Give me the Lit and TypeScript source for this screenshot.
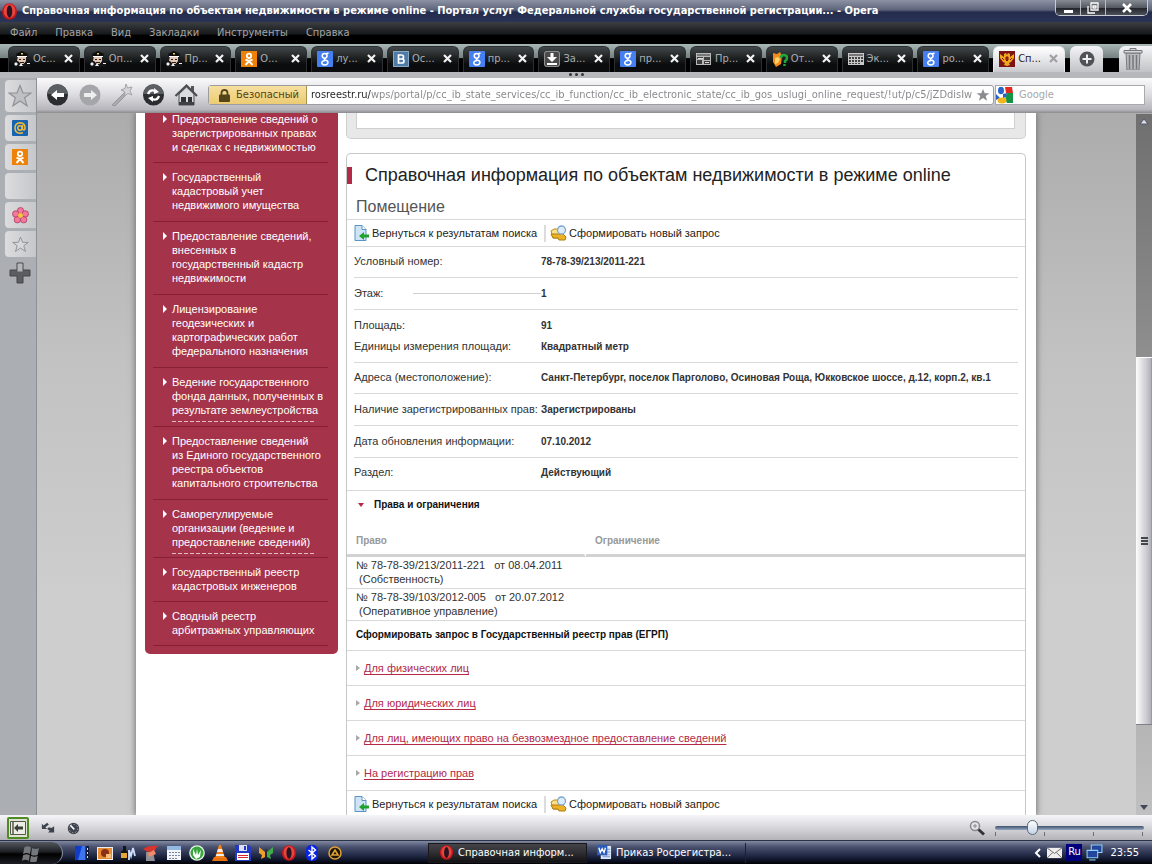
import { LitElement, html, css, svg, type TemplateResult } from "lit";
import { customElement, property } from "lit/decorators.js";

const icon = (size: number, body: TemplateResult, box = 16) =>
  html`<svg width=${size} height=${size} viewBox="0 0 ${box} ${box}" aria-hidden="true">${body}</svg>`;

const STAR = "M8 1l2 5h5.3l-4.2 3.2 1.6 5.3L8 11.3l-4.700 3.200 1.600-5.300L.7 6H6z";

const glyphs: Record<string, TemplateResult> = {
  opera: svg`<ellipse cx="8" cy="8" rx="7" ry="7.800" fill="#c4161c"/><ellipse cx="8" cy="7.500" rx="5.500" ry="6.500" fill="#e8453c"/><ellipse cx="8" cy="8" rx="2.600" ry="5.800" fill="#2a1424"/>`,
  police: svg`<path d="M2 3l6-3 6 3-1 3H3z" fill="#0c0c0c"/><path d="M7 2h2v1.500H7z" fill="#e7c85a"/><path d="M4 5h8v5l-2 3H6l-3-3z" fill="#e3c9b8"/><path d="M3 5h10v1H3z" fill="#fff"/><path d="M5 8h2v1H5zM9 8h2v1H9zM6 11h4v1H6z" fill="#2b1a14"/><path d="M0 11l4-1 4 4 4-3 4 1v4H0z" fill="#151515"/><path d="M0 13l2-2 2 2-2 2zM5 15l2-3 2 3zM13 12h3v1h-3z" fill="#f0f0f0"/>`,
  ok: svg`<path d="M0 0h16v16H0z" fill="#ee8208"/><circle cx="8" cy="4.800" r="2.200" fill="none" stroke="#fff" stroke-width="1.800"/><path d="M4.500 8.500q3.500 2.200 7 0M8 10l-3.500 4M8 10l3.500 4" fill="none" stroke="#fff" stroke-width="1.900"/>`,
  google: svg`<rect width="16" height="16" rx="1" fill="#4680f0"/><circle cx="7.600" cy="4.800" r="2.400" fill="none" stroke="#fff" stroke-width="1.500"/><path d="M9 3l2.500-1M8.500 7.200q-2 1-.5 1.800 3.200.8 3 2.700-.5 2.300-3.300 2.300-3-.2-3-2.200 .3-2 3.300-2.300" fill="none" stroke="#fff" stroke-width="1.400"/>`,
  vk: svg`<path d="M0 0h16v16H0z" fill="#4f7ba6"/><path d="M.5.500h15v15H.5z" fill="none" stroke="#86a9c8"/><path d="M5.500 4v8H9q2 0 2-2T9 8H6h2.600q1.900 0 1.900-2t-2-2z" fill="none" stroke="#fff" stroke-width="1.700"/>`,
  down: svg`<rect width="16" height="16" rx="3" fill="#909090"/><rect x="1" y="1" width="14" height="14" rx="2" fill="#4a4a4a"/><path d="M6.500 2h3v4H13l-5 5-5-5h3.500zM3 12h10v2H3z" fill="#fff"/>`,
  page: svg`<path d="M0 2h15v12H0z" fill="#b9b9b9"/><path d="M1 3h13v2H1z" fill="#777"/><path d="M1 6h6v2H1zM8 6h6v3H8zM1 9h5v4H1zM8 10h6v3H8z" fill="#3f3f3f"/><path d="M2 7h5v1H2zM9 11h4v1H9z" fill="#ddd"/>`,
  fox: svg`<path d="M1 2l4 1 3-2 2 4-1 8-5 3-3-5z" fill="#f28a1c"/><path d="M3 7l3-1 2 2-2 4-3 1z" fill="#ffd46b"/><path d="M9 7q0-3 3-3t3 3q0 2-2 3v2M12.500 13v2" fill="none" stroke="#20a838" stroke-width="2.400"/>`,
  grid: svg`<path d="M0 2h16v12H0z" fill="#c9c9c9"/><path d="M1 3h14v2H1z" fill="#777"/><path d="M1 6h2v2H1zM4 6h2v2H4zM7 6h2v2H7zM10 6h2v2h-2zM13 6h2v2h-2zM1 9h2v2H1zM4 9h2v2H4zM7 9h2v2H7zM10 9h2v2h-2zM13 9h2v2h-2zM1 12h2v1H1zM4 12h2v1H4zM7 12h2v1H7zM10 12h2v1h-2z" fill="#444"/>`,
  eagle: svg`<path d="M0 0h16v16H0z" fill="#7c1416"/><path d="M1 3l4 3V3l2-1 1 2 1-2 2 1v3l4-3v4l-3 4-2 1 1 2-3 1-3-1 1-2-2-1-3-4z" fill="#f0a81c"/><path d="M7 6h2v3l-1 1-1-1zM3 7l2 2M13 7l-2 2" stroke="#7c1416" fill="#b8251c"/>`,
};

const glyph = (name: string, size = 16) => icon(size, glyphs[name]);

const tabs: [string, string][] = [
  ["police", "Ос..."], ["police", "Оп..."], ["police", "Пр..."], ["ok", "О..."],
  ["google", "лу..."], ["vk", "Ос..."], ["google", "пр..."], ["down", "За..."],
  ["google", "пр..."], ["page", "Пр..."], ["fox", "От..."], ["grid", "Эк..."],
  ["google", "ро..."], ["eagle", "Сп..."],
];

@customElement("window-title")
class WindowTitle extends LitElement {
  static styles = css`
    :host { display: flex; height: 22px; align-items: center; padding-left: 1px; color: #fff;
      background: linear-gradient(#8d93a5, #5d6379 45%, #232c4c 55%, #2a3458);
      font: bold 11px/22px "DejaVu Sans Condensed", "DejaVu Sans", sans-serif; }
    .name { flex: 1; min-width: 0; padding-left: 4px; overflow: hidden; white-space: nowrap; font-size: 11px; font-weight: bold; margin: 0; }
    .buttons { display: flex; align-self: flex-start; margin-right: 4px; border: 1px solid #c8ccd4; border-top: 0; border-radius: 0 0 5px 5px; overflow: hidden; }
    button { width: 25px; height: 15px; padding: 0; border: 0; border-right: 1px solid #b8bcc4; display: grid; place-items: center;
      background: linear-gradient(#878b92, #555a62 50%, #22252b 55%, #4d5158); }
    button:last-child { width: 41px; border: 0; }
  `;
  render() {
    return html`
      ${glyph("opera", 17)}
      <h1 class="name">Справочная информация по объектам недвижимости в режиме online - Портал услуг Федеральной службы государственной регистрации... - Opera</h1>
      <div class="buttons">
        <button aria-label="Свернуть">${icon(12, svg`<path d="M2 8h9v3H2z" fill="#fff"/>`, 12)}</button>
        <button aria-label="Развернуть">${icon(12, svg`<path d="M4 1h7v7H4zM1 4v7h7M6 4h3v2H6z" fill="none" stroke="#fff" stroke-width="1.300"/>`, 12)}</button>
        <button aria-label="Закрыть">${icon(12, svg`<path d="M2 2l8 8M10 2l-8 8" stroke="#fff" stroke-width="2.500"/>`, 12)}</button>
      </div>`;
  }
}

@customElement("menu-bar")
class MenuBar extends LitElement {
  static styles = css`
    :host { display: flex; height: 22px; gap: 18px; padding-left: 10px; background: linear-gradient(#3b3f43, #16181a 55%, #000 60%); }
    button { border: 0; padding: 0; background: none; color: #a2a4a6; font: 11px/20px "DejaVu Sans Condensed", "DejaVu Sans", sans-serif; }
  `;
  render() {
    return html`${["Файл", "Правка", "Вид", "Закладки", "Инструменты", "Справка"].map((m) => html`<button>${m}</button>`)}`;
  }
}

@customElement("tab-strip")
class TabStrip extends LitElement {
  static styles = css`
    :host { display: block; background: #b6b8bb; }
    .bar { display: flex; height: 28px; padding: 2px 0 0 8px; box-sizing: border-box; background: linear-gradient(#a9b7b7, #75807f 50%, #000 52%); }
    .tabs { display: flex; gap: 4px; flex: 1; min-width: 0; }
    .tab { flex: 1 1 0; min-width: 0; display: flex; align-items: center; border-radius: 6px 6px 0 0; padding: 0 6px 2px 5px; box-sizing: border-box;
      background: linear-gradient(#42484a, #1d2021 45%, #0b0c0d 70%); color: #a9adaf; border: 1px solid #2b2f31; border-bottom: 0; }
    .pick { flex: 1; display: flex; align-items: center; gap: 3px; padding: 0; border: 0; background: none; color: inherit;
      min-width: 0; white-space: nowrap; overflow: hidden; font: 11px/16px "DejaVu Sans Condensed", "DejaVu Sans", sans-serif; }
    .pick svg { flex: none; }
    .close { border: 0; padding: 0; background: none; color: #f2f2f2; display: grid; }
    .active { background: linear-gradient(#fff, #e2e2e6 60%, #c9cacd); color: #222; border-color: #e8e8e8; }
    .active .close { color: #a0a0a4; }
    .add { width: 33px; margin-left: 5px; padding: 0; border: 0; border-radius: 6px 6px 0 0; background: linear-gradient(#f4f4f6, #c2c3c6); display: grid; place-items: center; }
    .bin { width: 33px; margin-left: 16px; padding: 0; border: 0; border-radius: 6px 0 0 0; background: linear-gradient(#f4f4f6, #c2c3c6); display: grid; place-items: center start; padding-left: 3px; }
    .grip { height: 6px; display: flex; justify-content: center; gap: 3px; align-items: flex-start; }
    .grip i { width: 3px; height: 3px; margin-top: 1px; border-radius: 2px; background: #333; }
  `;
  render() {
    return html`
      <div class="bar">
        <div class="tabs">
          ${tabs.map(([g, t], i) => html`<div class="tab ${i === tabs.length - 1 ? "active" : ""}">
            <button class="pick">${glyph(g)}<span>${t}</span></button>
            <button class="close" aria-label="Закрыть вкладку">${icon(9, svg`<path d="M1 1l7 7M8 1l-7 7" stroke="currentColor" stroke-width="2.200"/>`, 9)}</button>
          </div>`)}
        </div>
        <button class="add" aria-label="Новая вкладка">${icon(16, svg`<circle cx="8" cy="8" r="7.500" fill="#505257"/><path d="M8 3.500v9M3.500 8h9" stroke="#eee" stroke-width="2"/>`)}</button>
        <button class="bin" aria-label="Закрытые вкладки">${icon(22, svg`<path d="M4 5h14l-1 17H5z" fill="#b8babd" stroke="#74777b"/><path d="M7.500 7v14M11 7v14M14.500 7v14" stroke="#74777b" stroke-width="1.500"/><path d="M2 2.500h18v2.500H2zM8 .5h6v2H8z" fill="#d8d8da" stroke="#74777b"/>`, 22)}</button>
      </div>
      <div class="grip"><i></i><i></i><i></i></div>`;
  }
}

@customElement("address-bar")
class AddressBar extends LitElement {
  static styles = css`
    :host { display: flex; align-items: center; height: 35px; box-sizing: border-box; padding: 0 7px 1px 9px; background: linear-gradient(#fafafb, #dedee2 45%, #b6b6bc 90%, #8c8c90);
      font: 12px/18px "DejaVu Sans Condensed", "DejaVu Sans", sans-serif; }
    .tool { width: 32px; height: 26px; padding: 0; border: 0; background: none; flex: none; text-align: left; }
    .tool svg { display: block; }
    .address { flex: 1; min-width: 0; display: flex; align-items: center; height: 18px; border: 1px solid #9b9ba0; background: #fff; margin-left: 2px; border-radius: 3px; }
    .safe { display: flex; align-items: center; gap: 5px; height: 18px; width: 98px; padding: 0 0 0 9px; box-sizing: border-box; border: 0; border-right: 1px solid #a8924c; background: linear-gradient(#f6e0a0, #eccb73);
      color: #54441a; font: 11px/18px "DejaVu Sans Condensed", "DejaVu Sans", sans-serif; flex: none; }
    .url { flex: 1; min-width: 0; height: 18px; padding: 0 0 0 4px; border: 0; color: transparent; font: 11px/18px "DejaVu Sans Condensed", "DejaVu Sans", sans-serif;
      background: linear-gradient(90deg, #222 64px, #85858a 64px); -webkit-background-clip: text; background-clip: text; }
    .mark { border: 0; padding: 0 3px; background: none; display: grid; }
    .search { display: flex; align-items: center; width: 148px; height: 18px; border: 1px solid #a8a8ad; background: #fff; margin-left: 1px; gap: 6px; }
    .search input { flex: 1; min-width: 0; border: 0; padding: 0; background: none; font: 11px/18px "DejaVu Sans Condensed", "DejaVu Sans", sans-serif; }
    .search input::placeholder { color: #a8a8a8; }
  `;
  render() {
    return html`
      <button class="tool" aria-label="Назад">${icon(24, svg`<circle cx="11.500" cy="12" r="10.500" fill="#2b2d30"/><path d="M1.500 11a10 10 0 0 1 20 0z" fill="#5b5e62"/><path d="M5 12l6-5v3h7v4h-7v3z" fill="#fff"/>`, 24)}</button>
      <button class="tool" aria-label="Вперед">${icon(24, svg`<circle cx="12" cy="12" r="10.500" fill="#a5a6a9"/><path d="M19 12l-6-5v3H6v4h7v3z" fill="#eee"/>`, 24)}</button>
      <button class="tool" aria-label="Быстрый переход">${icon(24, svg`<path d="M2 22L15 9l2 2L5 23z" fill="#aaabae" stroke="#98999c"/><path d="M16 1l1.500 4L22 4l-2 4 2 4-4-1.500L14 13l1-4-4-2 4-1.500z" fill="#d6d6d9" stroke="#a4a4a8"/>`, 24)}</button>
      <button class="tool" aria-label="Обновить">${icon(24, svg`<circle cx="11.500" cy="12" r="10.500" fill="#2b2d30"/><path d="M1.500 11a10 10 0 0 1 20 0z" fill="#5b5e62"/><path d="M6 11q2-5 7-3M17 13q-2 5-7 3" fill="none" stroke="#fff" stroke-width="2.300"/><path d="M12 5l5 4-5 2zM11 19l-5-4 5-2z" fill="#fff"/>`, 24)}</button>
      <button class="tool" aria-label="Домой">${icon(24, svg`<path d="M17 3h3v6h-3z" fill="#555"/><path d="M5 11v11h15V11l-7.500-7z" fill="#dadbdd" stroke="#4c4e52"/><path d="M1.500 13L12.500 2.500 23 13" fill="none" stroke="#4c4e52" stroke-width="2.200"/><path d="M7 14h5v8H7zM14 14h4v5h-4z" fill="#2f3134"/><path d="M5 19h15v3H5z" fill="#3f4145"/>`, 24)}</button>
      <div class="address">
        <button class="safe">${icon(13, svg`<path d="M3.500 6V4a3 3 0 0 1 6 0v2" fill="none" stroke="#54441a" stroke-width="1.800"/><rect x="1" y="5.500" width="11" height="7.500" rx="1" fill="#54441a"/>`, 13)}Безопасный</button>
        <input class="url" aria-label="Адрес" value="rosreestr.ru/wps/portal/p/cc_ib_state_services/cc_ib_function/cc_ib_electronic_state/cc_ib_gos_uslugi_online_request/!ut/p/c5/jZDdisIw">
        <button class="mark" aria-label="В закладки">${icon(14, svg`<path d=${STAR} fill="#8c8c90"/>`)}</button>
      </div>
      <label class="search">
        ${icon(17, svg`<path d="M0 0h17v17H0z" fill="#fff"/><path d="M9 0h7l1 6h-7z" fill="#e02a20"/><path d="M11 6h6v10h-6q-3-4 0-10z" fill="#149444"/><path d="M0 7l4 4-4 2z" fill="#2a62c8"/><ellipse cx="5" cy="3.500" rx="3" ry="3.800" fill="#2a62c8"/><ellipse cx="6" cy="13.500" rx="4.500" ry="3" fill="#f4b51c"/><path d="M7 7l4-1-1 4-3 1z" fill="#2a62c8"/>`, 17)}
        <input type="text" aria-label="Поиск Google" placeholder="Google">
      </label>`;
  }
}

@customElement("side-panel")
class SidePanel extends LitElement {
  static styles = css`
    :host { display: flex; flex-direction: column; gap: 3px; width: 37px; flex: none; box-sizing: border-box; padding: 2px 0 0 5px; background: #abaeb3; border-right: 1px solid #8e9095; }
    button { height: 26px; padding: 0 1px 0 0; border: 0; border-radius: 4px 0 0 4px; background: linear-gradient(90deg, #dcdcde, #c6c7ca); display: grid; place-items: center; }
    .top { height: 32px; }
    .add { background: none; }
  `;
  render() {
    return html`
      <button class="top" aria-label="Закладки">${icon(24, svg`<path d=${STAR} fill="#bfc0c3" stroke="#909296" stroke-width=".8"/>`)}</button>
      <button aria-label="Почта">${icon(16, svg`<rect width="16" height="16" rx="1" fill="#1763b0"/><circle cx="8" cy="8" r="2.200" fill="none" stroke="#f2bd3c" stroke-width="1.500"/><path d="M10.500 5v4q1 2 2.500 0 .8-6-5-6.300Q3 3 3 8t5 5.300l3-.6" fill="none" stroke="#f2bd3c" stroke-width="1.500"/>`)}</button>
      <button aria-label="Одноклассники">${glyph("ok")}</button>
      <button aria-label="Панель"></button>
      <button aria-label="Цветок">${icon(17, svg`<g fill="#f4779c" stroke="#a8375c" stroke-width=".7"><circle cx="8" cy="3.500" r="3"/><circle cx="12.500" cy="6.500" r="3"/><circle cx="11" cy="12" r="3"/><circle cx="5" cy="12" r="3"/><circle cx="3.500" cy="6.500" r="3"/></g><circle cx="8" cy="8" r="2.300" fill="#f4c63c"/>`)}</button>
      <button aria-label="Избранное">${icon(17, svg`<path d=${STAR} fill="#d8d8da" stroke="#86888c" stroke-width=".8"/>`)}</button>
      <button class="add" aria-label="Добавить">${icon(22, svg`<path d="M8 1h6v7h7v6h-7v7H8v-7H1V8h7z" fill="#5b5d61" stroke="#44464a"/><path d="M8.500 1.500h5v8h-5z" fill="#b4b6b9"/>`, 22)}</button>`;
  }
}

const services: { lines: string[]; rule?: boolean }[] = [
  { lines: ["Предоставление сведений о", "зарегистрированных правах", "и сделках с недвижимостью"] },
  { lines: ["Государственный", "кадастровый учет", "недвижимого имущества"] },
  { lines: ["Предоставление сведений,", "внесенных в", "государственный кадастр", "недвижимости"] },
  { lines: ["Лицензирование", "геодезических и", "картографических работ", "федерального назначения"] },
  { lines: ["Ведение государственного", "фонда данных, полученных в", "результате землеустройства"], rule: true },
  { lines: ["Предоставление сведений", "из Единого государственного", "реестра объектов", "капитального строительства"] },
  { lines: ["Саморегулируемые", "организации (ведение и", "предоставление сведений)"], rule: true },
  { lines: ["Государственный реестр", "кадастровых инженеров"] },
  { lines: ["Сводный реестр", "арбитражных управляющих"] },
];

@customElement("service-menu")
class ServiceMenu extends LitElement {
  static styles = css`
    :host { display: block; width: 193px; flex: none; box-sizing: border-box; padding: 0 10px 8px 8px; background: #a53349; border-radius: 0 0 5px 5px; }
    ul { margin: 0; padding: 0; list-style: none; }
    li { border-bottom: 1px solid #872035; padding: 7px 0 9px 19px; }
    li:first-child { padding-top: 0; margin-top: -1px; padding-bottom: 8px; }
    li:nth-last-child(-n + 3) { padding-bottom: 8px; }
    a { position: relative; display: block; color: #fff; text-decoration: none; white-space: nowrap; font: 11px/14px "Liberation Sans", Arial, sans-serif; }
    a::before { content: ""; position: absolute; left: -9px; top: 3px; border: 4px solid transparent; border-left-color: #fff; border-right: 0; }
    .rule a::after { content: ""; position: absolute; left: 0; right: 12px; bottom: -5px; height: 1px; background: repeating-linear-gradient(90deg, #e3bcc4 0 4px, transparent 4px 6px); }
    span { display: block; }
  `;
  render() {
    return html`<ul>${services.map((s) => html`<li class=${s.rule ? "rule" : ""}><a href="#">${s.lines.map((l) => html`<span>${l}</span>`)}</a></li>`)}</ul>`;
  }
}

@customElement("result-tools")
class ResultTools extends LitElement {
  static styles = css`
    :host { display: flex; align-items: center; height: 26px; padding-left: 7px; }
    button { display: flex; align-items: center; gap: 2px; padding: 0 7px 0 0; border: 0; background: none; white-space: nowrap; color: #222; font: 11px/16px "Liberation Sans", Arial, sans-serif; }
    button + button { border-left: 2px solid #dcdcdc; padding-left: 4px; }
  `;
  render() {
    return html`
      <button>${icon(16, svg`<path d="M1 .5h7l4 4v11H1z" fill="#cfe4f5" stroke="#5b93c4"/><path d="M8 .5v4h4" fill="#fff" stroke="#5b93c4"/><path d="M5 11l5-4v2.500h5v3h-5V15z" fill="#1fa32b"/>`)}Вернуться к результатам поиска</button>
      <button>${icon(17, svg`<path d="M1 6l3-2h4l3 3h3l-2 6H3z" fill="#fbe08a" stroke="#c08c14"/><path d="M1 9h9l2-1 4 4-1 3H9l-1-2H3z" fill="#eeb024" stroke="#ad7e12"/><circle cx="11.500" cy="5" r="4" fill="#dcecfa" stroke="#7fa6ce" stroke-width="1.300"/>`, 17)}Сформировать новый запрос</button>`;
  }
}

const facts: { label: string; value: string; leader?: boolean; more?: [string, string] }[] = [
  { label: "Условный номер:", value: "78-78-39/213/2011-221" },
  { label: "Этаж:", value: "1", leader: true },
  { label: "Площадь:", value: "91", more: ["Единицы измерения площади:", "Квадратный метр"] },
  { label: "Адреса (местоположение):", value: "Санкт-Петербург, поселок Парголово, Осиновая Роща, Юкковское шоссе, д.12, корп.2, кв.1" },
  { label: "Наличие зарегистрированных прав:", value: "Зарегистрированы" },
  { label: "Дата обновления информации:", value: "07.10.2012" },
  { label: "Раздел:", value: "Действующий" },
];

@customElement("object-card")
class ObjectCard extends LitElement {
  static styles = css`
    :host { display: block; flex: 1; min-width: 0; color: #333; font: 11px/14px "Liberation Sans", Arial, sans-serif; }
    .above { height: 26px; box-sizing: border-box; padding: 0 10px 9px 9px; background: #e8e8e8; border: 1px solid #cdd0cd; border-top: 0; border-radius: 0 0 5px 5px; margin-bottom: 14px; }
    .above div { height: 100%; box-sizing: border-box; background: #fff; border: 1px solid #cdd0cd; border-top: 0; }
    .card { border: 1px solid #c4c8c6; border-bottom: 0; border-radius: 5px 5px 0 0; }
    h2 { margin: 13px 0 0; padding-left: 13px; border-left: 5px solid #b32a46; font: 18px/17px "Liberation Sans", Arial, sans-serif; color: #222; white-space: nowrap; }
    h3 { margin: 0; padding: 11px 0 0 9px; font: 16px/24px "Liberation Sans", Arial, sans-serif; color: #555; }
    result-tools { border-top: 1px solid #d9d9d9; }
    .facts { margin: 0; border-top: 1px solid #d9d9d9; border-bottom: 1px solid #d9d9d9; }
    .fact { display: grid; grid-template-columns: 187px 1fr; margin: 0 7px; padding: 5px 0; line-height: 21px; border-bottom: 1px solid #d9d9d9; white-space: nowrap; }
    .fact:nth-child(3n + 1) { padding-top: 4px; }
    .fact:last-child { border: 0; padding-bottom: 7px; }
    dt { display: flex; align-items: center; gap: 30px; }
    .leader { flex: 1; border-top: 1px solid #cfcfcf; }
    dd { margin: 0; font-weight: bold; font-size: 10px; }
    h4 { margin: 0; font: bold 10px/14px "Liberation Sans", Arial, sans-serif; color: #111; }
    .rights { display: flex; align-items: center; height: 28px; padding-left: 11px; gap: 10px; }
    .rights i { border: 3px solid transparent; border-top: 4px solid #b32a46; border-bottom: 0; }
    table { width: 100%; border-collapse: separate; border-spacing: 0; margin-top: 9px; }
    th, td { box-sizing: border-box; text-align: left; padding: 0 9px; }
    th { height: 29px; color: #999; font-size: 10px; border-bottom: 3px solid #d2d2d2; }
    th:first-child { width: 239px; border-right: 2px solid #fff; }
    td { padding-top: 1px; height: 32px; border-bottom: 1px solid #d9d9d9; white-space: pre; vertical-align: top; }
    .ask { height: 29px; box-sizing: border-box; padding: 7px 9px; }
    ul { list-style: none; margin: 0; padding: 0; }
    li { height: 35px; box-sizing: border-box; border-top: 1px solid #d9d9d9; padding-left: 9px; display: flex; align-items: center; gap: 4px; }
    li::before { content: ""; border: 3px solid transparent; border-left: 4px solid #a8a8a8; border-right: 0; }
    a { color: #b32a46; text-decoration: underline; text-underline-offset: 2px; }
  `;
  render() {
    return html`
      <div class="above"><div></div></div>
      <div class="card">
        <h2>Справочная информация по объектам недвижимости в режиме online</h2>
        <h3>Помещение</h3>
        <result-tools></result-tools>
        <dl class="facts">${facts.map((f) => html`<div class="fact">
          <dt>${f.label}${f.leader ? html`<span class="leader"></span>` : ""}</dt><dd>${f.value}</dd>
          ${f.more ? html`<dt>${f.more[0]}</dt><dd>${f.more[1]}</dd>` : ""}
        </div>`)}</dl>
        <h4 class="rights"><i></i>Права и ограничения</h4>
        <table>
          <thead><tr><th>Право</th><th>Ограничение</th></tr></thead>
          <tbody>
            <tr><td>№ 78-78-39/213/2011-221   от 08.04.2011
 (Собственность)</td><td></td></tr>
            <tr><td>№ 78-78-39/103/2012-005   от 20.07.2012
 (Оперативное управление)</td><td></td></tr>
          </tbody>
        </table>
        <h4 class="ask">Сформировать запрос в Государственный реестр прав (ЕГРП)</h4>
        <ul>${["Для физических лиц", "Для юридических лиц", "Для лиц, имеющих право на безвозмездное предоставление сведений", "На регистрацию прав"].map((l) => html`<li><a href="#">${l}</a></li>`)}</ul>
        <result-tools></result-tools>
      </div>`;
  }
}

@customElement("scroll-track")
class ScrollTrack extends LitElement {
  @property({ type: Number }) start = 34;
  @property({ type: Number }) size = 55;
  static styles = css`
    :host { display: flex; flex-direction: column; align-items: center; width: 16px; flex: none; margin-top: 1px; background: linear-gradient(#6f6f70, #8e8e8f 34%, #b4b4b4 86%, #c0c0c0); }
    svg { flex: none; }
    .lane { flex: 1; width: 100%; min-height: 0; display: flex; flex-direction: column; }
    .thumb, .before { flex: none; box-sizing: border-box; }
    .thumb { display: flex; flex-direction: column; justify-content: center; align-items: center; gap: 1px; border-top: 1px solid #fff; border-bottom: 1px solid #808088; background: linear-gradient(90deg, #fdfdfd, #cfcfd4 60%, #b5b5bf 90%, #8e8e98); }
    .thumb i { width: 7px; height: 2px; background: #44464c; }
  `;
  render() {
    return html`
      ${icon(16, svg`<path d="M4 10l4-5 4 5z" fill="#dfe2ea" stroke="#55586a"/>`)}
      <div class="lane">
        <div class="before" style="height:${this.start}%"></div>
        <div class="thumb" style="height:${this.size}%"><i></i><i></i><i></i></div>
      </div>
      ${icon(16, svg`<path d="M4 6h8l-4 5z" fill="#44475a"/>`)}`;
  }
}

@customElement("status-bar")
class StatusBar extends LitElement {
  static styles = css`
    :host { display: flex; align-items: center; height: 25px; box-sizing: border-box; border-top: 1px solid #f4f4f6; padding: 0 8px 0 7px; background: linear-gradient(#f4f4f6, #d6d6da 50%, #b4b4b8); }
    button { padding: 0; border: 0; background: none; display: grid; margin-right: 12px; }
    .panel { border: 2px solid #4f8a22; border-radius: 2px; background: #dfe3d4; }
    .zoom { margin-left: auto; display: flex; align-items: center; gap: 10px; }
    input { appearance: none; -webkit-appearance: none; width: 149px; height: 22px; margin: 0;
      background: repeating-linear-gradient(90deg, #6a6e78 0 1px, transparent 1px 49px) 0 15px / 100% 4px no-repeat; }
    input::-webkit-slider-runnable-track { height: 4px; border-radius: 2px; background: linear-gradient(#41536c, #93a6bf); }
    input::-webkit-slider-thumb { -webkit-appearance: none; width: 11px; height: 15px; margin-top: -6px; border: 1px solid #54687e; border-radius: 6px; background: linear-gradient(#fff, #c4d4e4); }
  `;
  render() {
    return html`
      <button class="panel" aria-label="Панели">${icon(18, svg`<path d="M1.500 2.500h15v13h-15z" fill="#eceee6" stroke="#54584c"/><path d="M4 3v12" stroke="#54584c" stroke-width="1.500"/><path d="M5 9l4-4v2.500h5v3H9V13z" fill="#3b3e38"/>`, 18)}</button>
      <button aria-label="Синхронизация">${icon(14, svg`<path d="M1 9V3l2 2 4-3 2 2-4 3 2 2zM15 6v7H8l2-2-3-2 2-2 3 1z" fill="#3d424c"/>`)}</button>
      <button aria-label="Turbo">${icon(13, svg`<circle cx="8" cy="8" r="7" fill="#3d424c"/><circle cx="8" cy="8" r="5.200" fill="none" stroke="#aab" stroke-dasharray="2 2"/><path d="M4 4l5 5" stroke="#fff" stroke-width="2"/>`)}</button>
      <label class="zoom">
        ${icon(16, svg`<circle cx="6" cy="6" r="4.500" fill="#e4e4e6" stroke="#87898d" stroke-width="1.500"/><path d="M4 6h4M6 4v4" stroke="#87898d"/><path d="M9.500 9.500L15 14.500" stroke="#333" stroke-width="3"/>`)}
        <input type="range" aria-label="Масштаб" min="0" max="100" value="23">
      </label>`;
  }
}

const launchers: TemplateResult[] = [
  svg`<path d="M1 1h14v14H1z" fill="#123cc8"/><path d="M8 1l-4 14h7V1z" fill="#3d74f0"/><path d="M12 1h3v14h-3z" fill="#151d3c"/><path d="M13 3h1v2h-1zM13 7h1v2h-1zM13 11h1v2h-1z" fill="#ddd"/>`,
  svg`<path d="M0 2h16v13H0z" fill="#eee"/><path d="M1 3h14v11H1z" fill="#e58b32"/><circle cx="8" cy="8" r="4" fill="#8c2f12"/><path d="M9 9h5v4H9z" fill="#f4c078"/>`,
  svg`<path d="M3 1h3v4l2 2v9H1V7l2-2z" fill="#151515"/><path d="M1 8h6v5H1z" fill="#e8a33a"/><path d="M9 5l2 6 2-8 2 8M9 15V5" stroke="#cfe0ff" fill="none" stroke-width="1.800"/>`,
  svg`<path d="M0 4q6-4 15-3l-4 5-6 1z" fill="#d8352c"/><path d="M3 7h7l2 9H3z" fill="#8f8f94"/><path d="M5 8l6-3 2 4-7 3z" fill="#f08a6a"/>`,
  svg`<path d="M1 1h14v14H1z" fill="#f2f4f8"/><path d="M1 1h14v4H1z" fill="#93b8e2"/><path d="M3 7h2v1H3zM6 7h2v1H6zM9 7h2v1H9zM12 7h2v1h-2zM3 10h2v1H3zM6 10h2v1H6zM9 10h2v1H9zM12 10h2v1h-2zM3 13h2v1H3zM6 13h2v1H6zM9 13h2v1H9z" fill="#7485a4"/>`,
  svg`<circle cx="8" cy="8" r="7.800" fill="#e8f4e6"/><circle cx="8" cy="8" r="6.500" fill="#35a53c"/><path d="M4 4l3 6 1-6 1 6 3-5-1 7-4 2-3-4z" fill="#fff"/>`,
  svg`<path d="M2 12h12l2 4H0z" fill="#e8700e"/><path d="M7 0h2l4 13H3z" fill="#f08218"/><path d="M6 4h4l1 3H5zM4.500 9h7l.7 2H3.800z" fill="#eee"/>`,
  svg`<path d="M0 0h14l2 2v14H0z" fill="#2438c8"/><path d="M4 0h8v6H4z" fill="#dce0f4"/><path d="M9 1h2v4H9z" fill="#2438c8"/><path d="M2 8h12v7H2z" fill="#fff"/><path d="M3 10h10v1H3zM3 12h10v1H3z" fill="#d23"/>`,
  svg`<path d="M7 7L1 2v6l3 2-1 4 4-2z" fill="#f0a028"/><path d="M9 7l6-5v6l-3 2 1 4-4-2z" fill="#3fae48"/><path d="M7.500 4h1v10h-1z" fill="#222"/>`,
  glyphs.opera,
  svg`<rect x="2" width="12" height="16" rx="5" fill="#0a24e4"/><path d="M4.500 5l7 6L8 14V2l3.500 3-7 6" fill="none" stroke="#fff" stroke-width="1.400"/>`,
  svg`<circle cx="8" cy="8" r="6" fill="#1a1408" stroke="#e0a030" stroke-width="1.500"/><path d="M8 5l3 5H5z" fill="none" stroke="#e0a030" stroke-width="1.600"/>`,
];

@customElement("task-bar")
class TaskBar extends LitElement {
  static styles = css`
    :host { display: flex; align-items: center; height: 24px; box-sizing: border-box; border-top: 1px solid #2b3348; color: #fff;
      background: linear-gradient(#8289a0, #4a5270 25%, #242c48 60%, #070b1c 90%, #000); font: 11px/16px "DejaVu Sans Condensed", "DejaVu Sans", sans-serif; }
    button { padding: 0; border: 0; background: none; display: grid; color: inherit; font: inherit; }
    .start { width: 63px; height: 22px; border-radius: 0 11px 11px 0; place-items: center; background: linear-gradient(#54585e, #1c1e22 45%, #000 55%, #1c1e24); border-right: 1px solid #868c9a; }
    .quick { display: flex; gap: 7px; margin-left: 11px; width: 354px; }
    .task { display: flex; align-items: center; gap: 4px; width: 159px; height: 20px; padding-left: 10px; box-sizing: border-box; white-space: nowrap; border-right: 1px solid #1a2038; }
    .current { background: linear-gradient(#454549, #2e2e32 50%, #121214); border: 1px solid #18181c; }
    .tray { display: flex; align-items: center; gap: 4px; margin-left: auto; padding-right: 13px; }
    .lang { width: 16px; text-align: center; background: #00007c; height: 17px; }
    time { padding-left: 3px; }
  `;
  render() {
    return html`
      <button class="start" aria-label="Пуск">${icon(18, svg`<path d="M2 3q3-2 6 0L7 9Q4 7 1 9zM9 3.500q3 1.500 6 0L14 9.500q-3 1.500-6 0zM1 10q3-2 6 0l-1 5q-3-2-6 0zM8 10.500q3 1.500 6 0l-1 5q-3 1.500-6 0z" fill="#74777c"/>`)}</button>
      <nav class="quick">${launchers.map((l, i) => html`<button aria-label="Программа ${i + 1}">${icon(16, l)}</button>`)}</nav>
      <button class="task current">${glyph("opera", 15)}Справочная информ...</button>
      <button class="task">${icon(15, svg`<path d="M4 1h11v14H4z" fill="#dde8f8"/><path d="M6 4h8v1H6zM6 7h8v1H6zM6 10h8v1H6zM6 12h8v1H6z" fill="#6f94cf"/><path d="M0 0h11v11H0z" fill="#2a5bb8"/><path d="M2 3l1.500 5L5.500 4l2 4L9 3" fill="none" stroke="#fff" stroke-width="1.400"/>`)}Приказ Росрегистра...</button>
      <div class="tray">
        <button aria-label="Показать значки">${icon(10, svg`<path d="M7 1L3 5l4 4" fill="none" stroke="#fff" stroke-width="2"/>`, 10)}</button>
        ${icon(15, svg`<path d="M0 3h16v11H0z" fill="#eee"/><path d="M0 3l8 6 8-6M0 14l6-6M16 14l-6-6" fill="none" stroke="#666"/>`)}
        <span class="lang">Ru</span>
        ${icon(17, svg`<path d="M5 1h10v7H5z" fill="#24459c" stroke="#8fd0f4"/><path d="M1 6h10v7H1z" fill="#24459c" stroke="#8fd0f4"/><path d="M3 15h6" stroke="#8fd0f4"/>`)}
        <time>23:55</time>
      </div>`;
  }
}

@customElement("app-root")
class AppRoot extends LitElement {
  static styles = css`
    :host { display: flex; flex-direction: column; height: 100vh; overflow: hidden; }
    .middle { flex: 1; min-height: 0; display: flex; }
    .browser { flex: 1; min-width: 0; display: flex; flex-direction: column; }
    .view { flex: 1; min-height: 0; display: flex; background: linear-gradient(#acacac, #c2c2c2 35%, #cecece 70%); }
    .scroll { flex: 1; min-width: 0; overflow: hidden; display: flex; justify-content: center; padding-right: 1px; }
    .page { flex: 0 1 900px; display: flex; align-items: flex-start; gap: 8px; box-sizing: border-box; padding: 0 10px 0 9px; background: #fff; box-shadow: 0 0 6px 1px #777; min-height: 100%; }
  `;
  render() {
    return html`
      <window-title></window-title>
      <menu-bar></menu-bar>
      <tab-strip></tab-strip>
      <div class="middle">
        <side-panel></side-panel>
        <div class="browser">
          <address-bar></address-bar>
          <div class="view">
            <div class="scroll"><main class="page"><service-menu></service-menu><object-card></object-card></main></div>
            <scroll-track></scroll-track>
          </div>
        </div>
      </div>
      <status-bar></status-bar>
      <task-bar></task-bar>`;
  }
}
